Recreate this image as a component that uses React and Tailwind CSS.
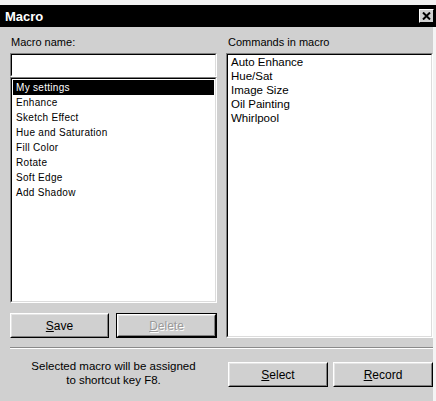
import React, { useState } from 'react';

const macros = [
  'My settings',
  'Enhance',
  'Sketch Effect',
  'Hue and Saturation',
  'Fill Color',
  'Rotate',
  'Soft Edge',
  'Add Shadow',
];

const commands = ['Auto Enhance', 'Hue/Sat', 'Image Size', 'Oil Painting', 'Whirlpool'];

// Classic 3D sunken frame: two nested borders
const Sunken = ({ className = '', children }) => (
  <div className={`border border-t-[#808080] border-l-[#808080] border-b-white border-r-white ${className}`}>
    <div className="h-full border border-t-black border-l-black border-b-[#dcdcdc] border-r-[#dcdcdc] bg-white">
      {children}
    </div>
  </div>
);

const Button = ({ children, isDefault, disabled, className = '' }) => {
  const face = (
    <div className="h-full border border-t-white border-l-white border-b-black border-r-black">
      <div className="h-full flex items-center justify-center border border-t-[#e4e4e4] border-l-[#e4e4e4] border-b-[#808080] border-r-[#808080] bg-[#d0d0d0]">
        <span
          className={`text-[12px] leading-none ${disabled ? 'text-[#9a9a9a] [text-shadow:1px_1px_0_#fff]' : 'text-black'}`}
        >
          {children}
        </span>
      </div>
    </div>
  );
  return (
    <div className={`h-[25px] ${isDefault ? 'border border-black' : ''} ${className}`}>{face}</div>
  );
};

export default function App() {
  const [selected, setSelected] = useState(0);

  return (
    <div className="w-[436px] h-[401px] bg-white overflow-hidden font-['Liberation_Sans',Arial,sans-serif]">
      <div className="h-[5px] bg-[#f2f2f2]" />

      {/* Title bar */}
      <div className="h-[22px] bg-black flex items-center justify-between pl-[5px] pr-[2px]">
        <span className="text-white font-bold text-[13px] leading-none">Macro</span>
        <div className="w-[15px] h-[14px] border border-t-white border-l-white border-b-black border-r-black bg-[#d0d0d0] flex items-center justify-center">
          <svg width="9" height="8" viewBox="0 0 9 8">
            <path d="M1 0.5 L8 7.5 M8 0.5 L1 7.5" stroke="black" strokeWidth="2" />
          </svg>
        </div>
      </div>

      {/* Dialog body */}
      <div className="w-[436px] h-[374px] bg-[#d0d0d0] border-r-[3px] border-r-[#f4f4f4] pl-[10px]">
        <div className="flex gap-[9px] pt-[8px]">
          {/* Macro name column */}
          <div className="w-[207px] flex flex-col">
            <div className="text-[11px] leading-[14px] h-[14px] pl-[1px] mb-[4px] text-black">Macro name:</div>
            <Sunken className="h-[24px]">
              <input className="w-full h-full outline-none bg-white text-[11px] px-[2px]" defaultValue="" />
            </Sunken>
            <Sunken className="h-[226px]">
              <div className="pt-[1px] px-[1px]">
                {macros.map((m, i) => (
                  <div
                    key={m}
                    onClick={() => setSelected(i)}
                    className={`h-[15px] leading-[15px] pl-[3px] text-[10px] tracking-[0.3px] ${
                      selected === i ? 'bg-black text-white' : 'text-black'
                    }`}
                  >
                    {m}
                  </div>
                ))}
              </div>
            </Sunken>
            <div className="flex gap-[7px] mt-[10px]">
              <Button className="w-[99px]">
                <span className="underline">S</span>ave
              </Button>
              <Button className="w-[101px]" isDefault disabled>
                <span className="underline">D</span>elete
              </Button>
            </div>
          </div>

          {/* Commands column */}
          <div className="w-[207px] flex flex-col">
            <div className="text-[11px] leading-[14px] h-[14px] pl-[2px] mb-[4px] text-black">Commands in macro</div>
            <Sunken className="h-[285px]">
              <div className="pl-[3px] pt-0">
                {commands.map((c) => (
                  <div key={c} className="text-[11.5px] leading-[14px] text-black">
                    {c}
                  </div>
                ))}
              </div>
            </Sunken>
          </div>
        </div>

        {/* Separator */}
        <div className="mt-[9px] w-[423px] border-t border-t-[#8a8a8a] border-b border-b-white" />

        {/* Footer */}
        <div className="flex gap-[9px]">
          <div className="w-[207px] pt-[10px] text-center text-[11.5px] leading-[14px] text-black">
            Selected macro will be assigned
            <br />
            to shortcut key F8.
          </div>
          <div className="flex gap-[5px] pt-[13px] pl-[2px]">
            <Button className="w-[100px]">
              <span className="underline">S</span>elect
            </Button>
            <Button className="w-[100px]">
              <span className="underline">R</span>ecord
            </Button>
          </div>
        </div>
      </div>
    </div>
  );
}
